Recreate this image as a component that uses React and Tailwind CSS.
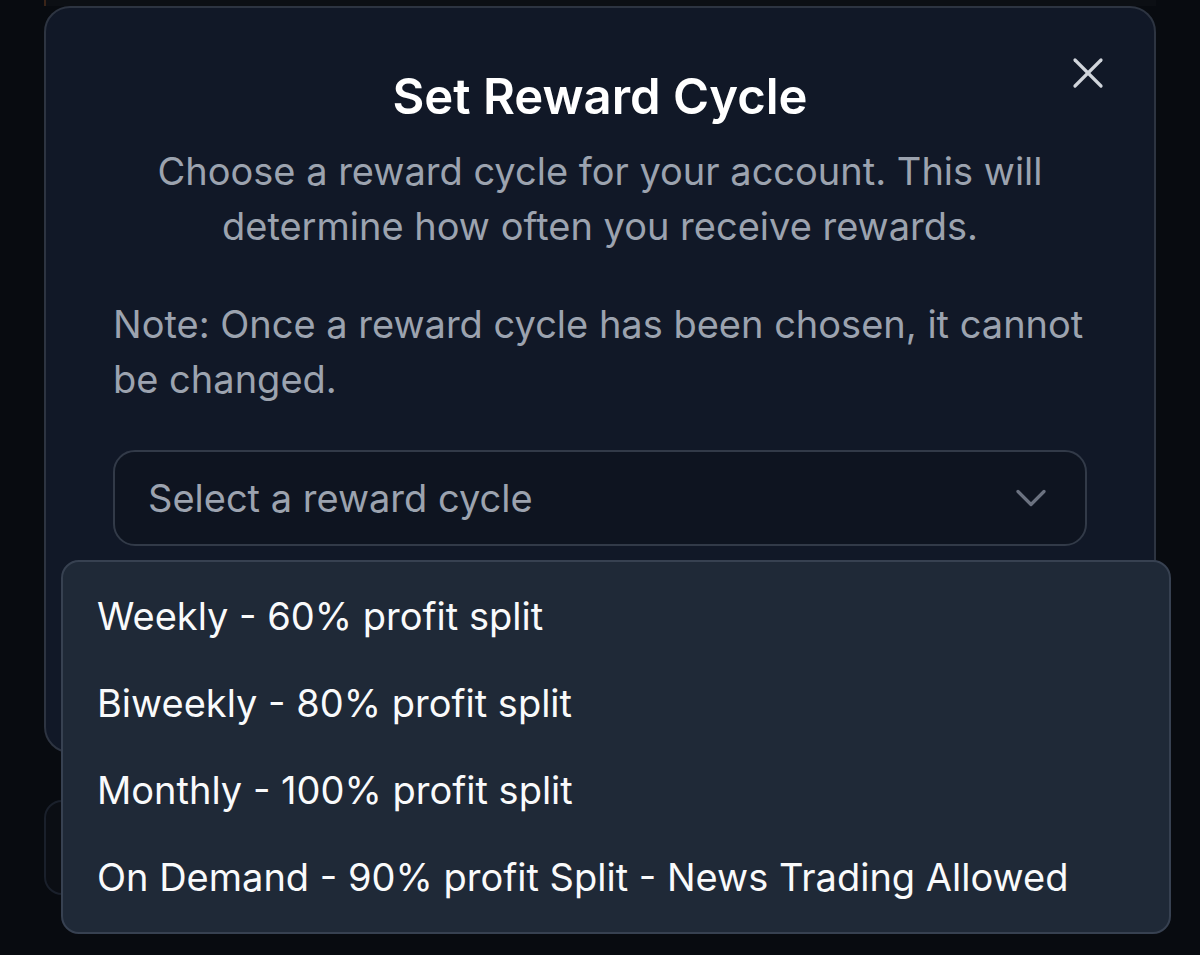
import { X, ChevronDown } from 'lucide-react';

const options = [
  'Weekly - 60% profit split',
  'Biweekly - 80% profit split',
  'Monthly - 100% profit split',
  'On Demand - 90% profit Split - News Trading Allowed',
];

export default function App() {
  return (
    <div
      className="relative h-[955px] w-[1200px] overflow-hidden bg-[#080b10]"
      style={{ fontFamily: 'Inter, "Noto Sans", sans-serif' }}
    >
      {/* page behind the overlay */}
      <div className="mx-[44px] h-[6px] border-l-2 border-[#3a2418] bg-[#0c0f14]" />
      <div className="mx-[44px] mt-[794px] h-[95px] w-[900px] rounded-[18px] border-2 border-[#1a202b] bg-[#0b0e14]" />

      {/* dialog */}
      <div className="absolute left-[44px] top-[6px] w-[1112px] rounded-[26px] border-2 border-[#2d3441] bg-[#111827] px-[67px] pt-[67px] pb-[66px]">
        <button className="absolute right-[40px] top-[39px] text-[#d1d5db]">
          <X size={52} strokeWidth={1.5} />
        </button>
        <h2 className="text-center text-[49px] font-semibold leading-[44px] text-white">Set Reward Cycle</h2>
        <p className="mt-[25px] text-center text-[38px] leading-[55px] text-[#9ca3af]">
          Choose a reward cycle for your account. This will
          <br />
          determine how often you receive rewards.
        </p>
        <p className="mt-[43px] text-[38px] leading-[55px] text-[#9ca3af]">
          Note: Once a reward cycle has been chosen, it cannot be changed.
        </p>
        <button className="mt-[43px] flex h-[96px] w-full items-center justify-between rounded-[22px] border-2 border-[#323a48] bg-[#0e1420] pl-[33px] pr-[28px] text-[38px] text-[#9ca3af]">
          <span>Select a reward cycle</span>
          <ChevronDown size={52} strokeWidth={1.5} className="text-[#6b7280]" />
        </button>
        <div className="mt-[43px] h-[96px]" />
      </div>

      {/* open select menu */}
      <div className="absolute left-[61px] top-[560px] w-[1110px] rounded-[18px] border-2 border-[#374151] bg-[#1f2937] py-[11px]">
        {options.map((o) => (
          <div key={o} className="flex h-[87px] items-center px-[34px] text-[38px] text-[#f9fafb]">
            {o}
          </div>
        ))}
      </div>
    </div>
  );
}
